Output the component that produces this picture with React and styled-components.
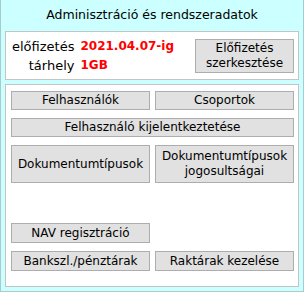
import styled, { createGlobalStyle } from 'styled-components';

const GlobalStyle = createGlobalStyle`
  body {
    margin: 0;
    font-family: "DejaVu Sans", Verdana, sans-serif;
  }
`;

const Frame = styled.div`
  width: 304px;
  height: 292px;
  box-sizing: border-box;
  background: #ccffff;
  border: 1px solid #a8cccc;
  border-top: none;
  padding: 0 4px;
  display: flex;
  flex-direction: column;
`;

const Title = styled.div`
  height: 31px;
  line-height: 29px;
  text-align: center;
  font-size: 12.5px;
  color: #000;
`;

const Panel = styled.div`
  box-sizing: border-box;
  background: #fff;
  border: 1px solid #c4c4c4;
  height: ${(p) => p.$h}px;
  margin-bottom: 4px;
`;

const SubPanel = styled(Panel)`
  display: flex;
  align-items: center;
  justify-content: space-between;
  padding: 0 4px 0 6px;
`;

const InfoGrid = styled.div`
  display: grid;
  grid-template-columns: auto auto;
  column-gap: 6px;
  font-size: 13px;
  line-height: 19px;
`;

const Label = styled.span`
  text-align: right;
  color: #000;
`;

const Value = styled.span`
  color: #ff0000;
  font-family: "DejaVu Sans", Verdana, sans-serif;
  font-weight: bold;
  font-size: 12px;
`;

const Button = styled.button`
  box-sizing: border-box;
  margin: 0;
  padding: 0 2px;
  background: #e1e1e1;
  border: 1px solid #adadad;
  border-radius: 0;
  font-family: "DejaVu Sans", Verdana, sans-serif;
  font-size: 12px;
  line-height: 15px;
  color: #000;
  height: ${(p) => p.$h || 19}px;
  width: 100%;
  grid-column: ${(p) => (p.$wide ? '1 / 3' : 'auto')};
`;

const EditButton = styled(Button)`
  width: 99px;
  height: 34px;
`;

const ButtonGrid = styled.div`
  display: grid;
  grid-template-columns: 139px 139px;
  column-gap: 5px;
  row-gap: 8px;
  padding: 6px 0 0 5px;
`;

const Spacer = styled.div`
  grid-column: 1 / 3;
  height: 24px;
`;

export default function App() {
  return (
    <>
      <GlobalStyle />
      <Frame>
        <Title>Adminisztráció és rendszeradatok</Title>
        <SubPanel $h={49}>
          <InfoGrid>
            <Label>előfizetés</Label>
            <Value>2021.04.07-ig</Value>
            <Label>tárhely</Label>
            <Value>1GB</Value>
          </InfoGrid>
          <EditButton>
            Előfizetés
            <br />
            szerkesztése
          </EditButton>
        </SubPanel>
        <Panel $h={203}>
          <ButtonGrid>
            <Button>Felhasználók</Button>
            <Button>Csoportok</Button>
            <Button $wide>Felhasználó kijelentkeztetése</Button>
            <Button $h={38}>Dokumentumtípusok</Button>
            <Button $h={38}>
              Dokumentumtípusok
              <br />
              jogosultságai
            </Button>
            <Spacer />
            <Button $h={20}>NAV regisztráció</Button>
            <span />
            <Button $h={20}>Bankszl./pénztárak</Button>
            <Button $h={20}>Raktárak kezelése</Button>
          </ButtonGrid>
        </Panel>
      </Frame>
    </>
  );
}
